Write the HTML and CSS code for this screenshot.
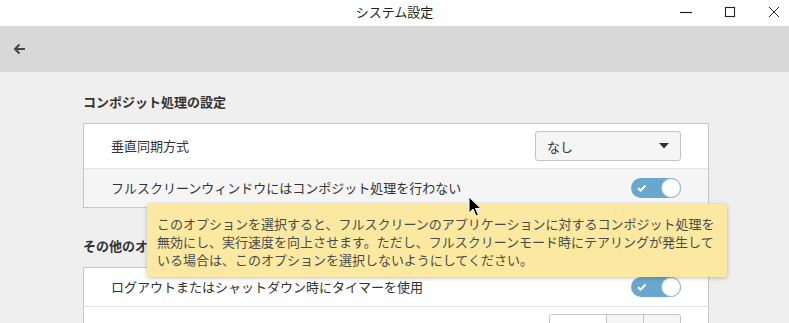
FILE: index.html
```html
<!DOCTYPE html>
<html lang="ja">
<head>
<meta charset="UTF-8">
<meta name="viewport" content="width=device-width, initial-scale=1.0">
<title>システム設定</title>
<link rel="stylesheet" href="styles.css">
</head>
<body>

<div class="titlebar">
  <span class="title">システム設定</span>
  <div class="controls">
    <svg class="ctl" width="14" height="14" viewBox="0 0 14 14"><path d="M1 7.5h12" stroke="#222" stroke-width="1.2"/></svg>
    <svg class="ctl" width="14" height="14" viewBox="0 0 14 14"><rect x="2.5" y="2.5" width="9" height="9" fill="none" stroke="#222" stroke-width="1.1"/></svg>
    <svg class="ctl" width="14" height="14" viewBox="0 0 14 14"><path d="M2 2l10 10M12 2L2 12" stroke="#222" stroke-width="1"/></svg>
  </div>
</div>

<div class="toolbar">
  <svg class="back" width="14" height="14" viewBox="0 0 14 14"><path d="M13 7H3M7.5 2.5L3 7l4.5 4.5" fill="none" stroke="#444" stroke-width="2"/></svg>
</div>

<div class="content">
  <h2 class="heading">コンポジット処理の設定</h2>
  <div class="frame">
    <div class="row">
      <span class="label">垂直同期方式</span>
      <div class="combo">
        <span>なし</span>
        <svg width="10" height="6" viewBox="0 0 10 6"><path d="M0 0h10L5 5.5z" fill="#333"/></svg>
      </div>
    </div>
    <div class="row hover">
      <span class="label">フルスクリーンウィンドウにはコンポジット処理を行わない</span>
      <div class="switch"><svg width="12" height="10" viewBox="0 0 12 10"><path d="M2 5.2l2.6 2.4L9.5 2.5" fill="none" stroke="#fff" stroke-width="2"/></svg><span class="knob"></span></div>
    </div>
  </div>

  <h2 class="heading second">その他のオプション</h2>
  <div class="frame">
    <div class="row">
      <span class="label">ログアウトまたはシャットダウン時にタイマーを使用</span>
      <div class="switch"><svg width="12" height="10" viewBox="0 0 12 10"><path d="M2 5.2l2.6 2.4L9.5 2.5" fill="none" stroke="#fff" stroke-width="2"/></svg><span class="knob"></span></div>
    </div>
    <div class="row">
      <span class="label">タイマーの遅延</span>
      <div class="spin">
        <span class="entry">60</span>
        <span class="sbtn">−</span>
        <span class="sbtn">+</span>
      </div>
    </div>
  </div>
</div>

<div class="tooltip">このオプションを選択すると、フルスクリーンのアプリケーションに対するコンポジット処理を無効にし、実行速度を向上させます。ただし、フルスクリーンモード時にテアリングが発生している場合は、このオプションを選択しないようにしてください。</div>

<svg class="cursor" width="14" height="21" viewBox="0 0 14 21"><path d="M1 1v16l4-4 3 7 2.5-1-3-6.5H13z" fill="#000" stroke="#fff" stroke-width="1"/></svg>

</body>
</html>
```

FILE: styles.css
```css
body {
  margin: 0;
  font-family: "Noto Sans CJK JP", "Noto Sans", sans-serif;
  font-size: 13px;
  color: #333;
  background-color: #efefef;
  height: 100vh;
  overflow: hidden;
}
.titlebar {
  height: 26px;
  background-color: #fff;
  display: flex;
  align-items: center;
  justify-content: center;
  position: relative;
}
.title {
  font-size: 13px;
  line-height: 20px;
  color: #222;
  margin-top: -2px;
}
.controls {
  position: absolute;
  right: 8px;
  top: 5px;
  display: flex;
  gap: 30px;
}
.ctl {
  display: block;
}
.toolbar {
  height: 46px;
  background-color: #d8d8d8;
  display: flex;
  align-items: center;
  padding-left: 12px;
}
.back {
  display: block;
}
.content {
  padding: 20px 80px 0 83px;
}
.heading {
  font-size: 13px;
  font-weight: bold;
  line-height: 20px;
  margin: 0 0 11px 0;
  color: #333;
}
.heading.second {
  margin-top: 28px;
}
.frame {
  background-color: #fff;
  border: 1px solid #c6c6c6;
}
.row {
  display: flex;
  align-items: center;
  justify-content: space-between;
  padding: 9px 27px 9px 27px;
  border-top: 1px solid #e3e3e3;
  min-height: 20px;
}
.row:first-child {
  border-top: none;
}
.row.hover {
  background-color: #f5f5f5;
}
.label {
  line-height: 20px;
}
.row:has(.combo), .row:has(.spin) {
  padding-top: 7px;
  padding-bottom: 7px;
}
.combo {
  height: 28px;
  border: 1px solid #c4c4c4;
  border-radius: 3px;
  background-color: #f5f5f5;
  display: flex;
  align-items: center;
  justify-content: space-between;
  padding: 0 11px 0 11px;
  box-sizing: content-box;
  width: 122px;
}
.combo svg {
  display: block;
}
.switch {
  width: 50px;
  height: 20px;
  border-radius: 10px;
  background-color: #6aa7cf;
  position: relative;
  display: flex;
  align-items: center;
  padding-left: 4px;
  box-sizing: border-box;
}
.switch svg {
  display: block;
  margin-left: 1px;
}
.knob {
  position: absolute;
  right: 0;
  top: 0;
  width: 18px;
  height: 18px;
  border-radius: 50%;
  background-color: #fff;
  border: 1px solid #8dbddb;
}
.spin {
  display: flex;
  height: 30px;
  border: 1px solid #c4c4c4;
  border-radius: 3px;
  overflow: hidden;
}
.spin .entry {
  width: 56px;
  background-color: #fff;
  line-height: 30px;
  padding-left: 8px;
  box-sizing: border-box;
}
.spin .sbtn {
  width: 36px;
  background-color: #f5f5f5;
  border-left: 1px solid #c4c4c4;
  text-align: center;
  line-height: 30px;
}
.tooltip {
  position: absolute;
  left: 147px;
  top: 204px;
  width: 560px;
  padding: 11px 10px 8px 10px;
  background-color: #fce9a1;
  color: #4a4a4a;
  font-size: 13px;
  line-height: 18px;
  border-radius: 2px;
  box-shadow: 0 1px 4px rgba(0, 0, 0, 0.25);
}
.cursor {
  position: absolute;
  left: 468px;
  top: 196px;
}
```
